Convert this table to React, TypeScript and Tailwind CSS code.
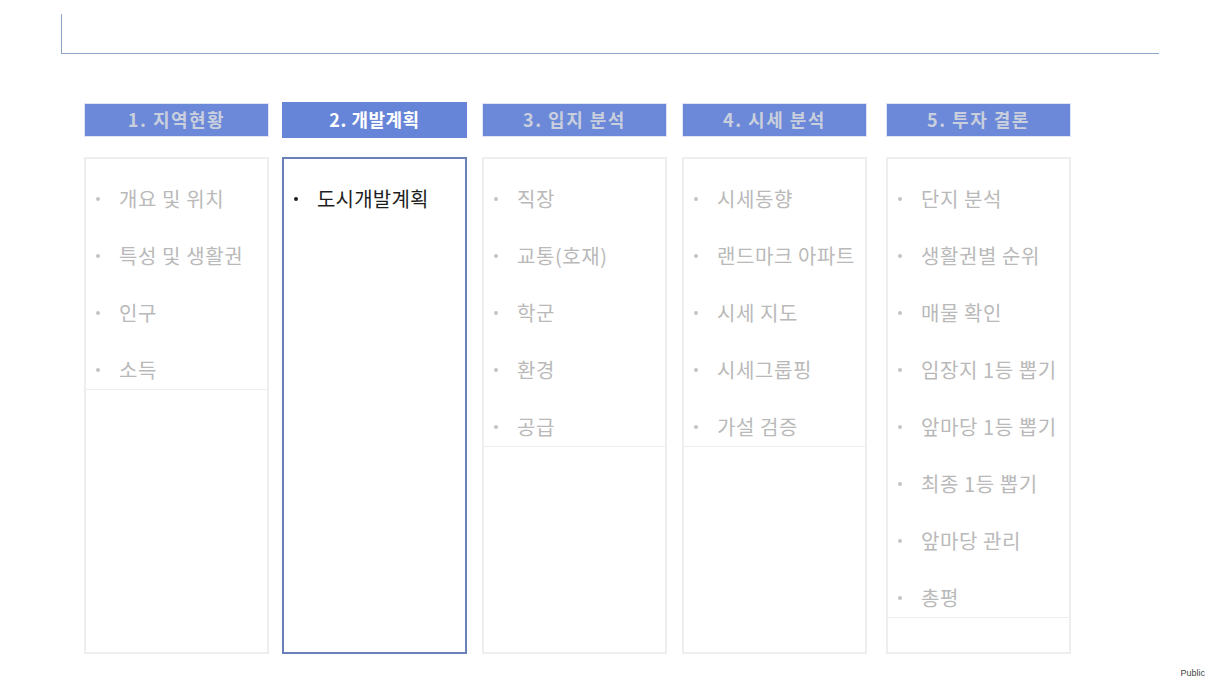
import React from 'react';

type Column = {
  title: string;
  items: string[];
  active?: boolean;
  ml: string;
};

const columns: Column[] = [
  { title: '1. 지역현황', items: ['개요 및 위치', '특성 및 생활권', '인구', '소득'], ml: 'ml-[84px]' },
  { title: '2. 개발계획', items: ['도시개발계획'], active: true, ml: 'ml-[13px]' },
  { title: '3. 입지 분석', items: ['직장', '교통(호재)', '학군', '환경', '공급'], ml: 'ml-[15px]' },
  { title: '4. 시세 분석', items: ['시세동향', '랜드마크 아파트', '시세 지도', '시세그룹핑', '가설 검증'], ml: 'ml-[15px]' },
  {
    title: '5. 투자 결론',
    items: ['단지 분석', '생활권별 순위', '매물 확인', '임장지 1등 뽑기', '앞마당 1등 뽑기', '최종 1등 뽑기', '앞마당 관리', '총평'],
    ml: 'ml-[19px]',
  },
];

const font = { fontFamily: '"Noto Sans CJK KR", "Noto Sans", sans-serif' };

function StepColumn({ col }: { col: Column }) {
  return (
    <div className={`${col.ml} flex w-[185px] flex-col`}>
      {/* Header */}
      {col.active ? (
        <div className="mt-[-1px] flex h-[36px] items-center justify-center bg-[#6785d8] pb-[2px] text-[18px] font-bold tracking-[0.5px] text-white">
          {col.title}
        </div>
      ) : (
        <div className="flex h-[34px] items-center justify-center border border-[#dfe5f4] bg-[#6b88d9] pb-[2px] text-[18px] font-bold tracking-[1.5px] text-[#c9cfdc]">
          {col.title}
        </div>
      )}

      {/* Body */}
      <div
        className={`${col.active ? 'mt-[19px] border-2 border-[#6a80b8]' : 'mt-[20px] border-2 border-[#eeeeee]'} h-[497px]`}
      >
        <ul className={`pt-[2px] ${col.active ? '' : 'border-b border-[#eeeeee]'}`}>
          {col.items.map((item) => (
            <li key={item} className="flex h-[57px] items-start pt-[26px]">
              <span
                className={`ml-[10px] mt-[10px] h-[4px] w-[4px] shrink-0 rounded-full ${col.active ? 'bg-[#222222]' : 'bg-[#c4c4c4]'}`}
              />
              <span
                className={`ml-[19px] whitespace-nowrap text-[20px] leading-[24px] ${col.active ? 'tracking-[0.2px] text-[#1f1f1f]' : 'tracking-[0.6px] text-[#b9b9b9]'}`}
              >
                {item}
              </span>
            </li>
          ))}
        </ul>
      </div>
    </div>
  );
}

export default function App() {
  return (
    <div className="relative h-[684px] w-[1216px] overflow-hidden bg-white" style={font}>
      {/* Title frame */}
      <div className="ml-[61px] mt-[14px] h-[40px] w-[1098px] border-b border-l border-[#8ea4c8]" />

      {/* Steps */}
      <div className="mt-[49px] flex">
        {columns.map((col) => (
          <StepColumn key={col.title} col={col} />
        ))}
      </div>

      {/* Classification label */}
      <div className="absolute bottom-[4px] right-[11px] text-[9px] text-[#444444]" style={{ fontFamily: '"Liberation Sans", Arial, sans-serif' }}>
        Public
      </div>
    </div>
  );
}
